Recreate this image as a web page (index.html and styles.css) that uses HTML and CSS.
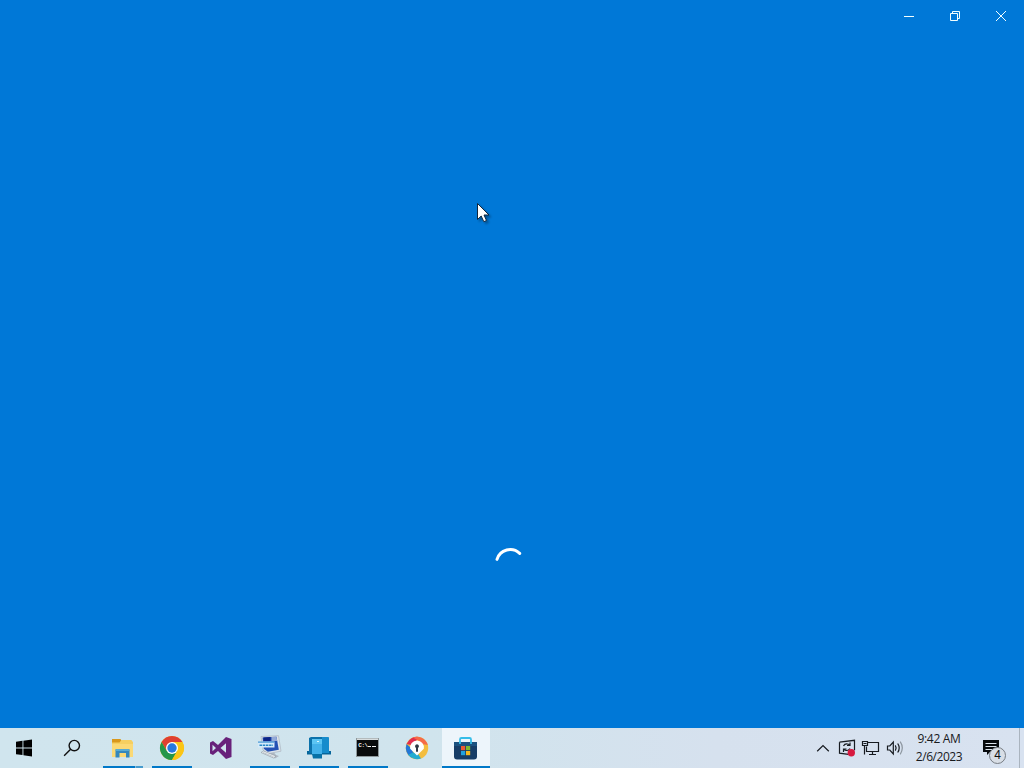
FILE: index.html
```html
<!DOCTYPE html>
<html lang="en">
<head>
    <meta charset="UTF-8">
    <meta name="viewport" content="width=device-width, initial-scale=1.0">
    <title>Microsoft Store</title>
    <link rel="stylesheet" href="styles.css">
</head>
<body>
    <div class="desktop">
        <main class="window">
            <div class="titlebar">
                <button class="caption" aria-label="Minimize">
                    <svg width="46" height="32"><path d="M18 16.5h10"/></svg>
                </button>
                <button class="caption" aria-label="Restore">
                    <svg width="46" height="32"><path d="M18.500 13.500h7v7h-7zM20.500 13.500v-2h7v7h-2"/></svg>
                </button>
                <button class="caption" aria-label="Close">
                    <svg width="46" height="32"><path d="M18 11l10 10M28 11l-10 10"/></svg>
                </button>
            </div>
            <div class="splash">
                <svg class="spinner" width="32" height="32" viewBox="0 0 32 32"><path d="M4 13.400A13.800 13.800 0 0 1 26.700 7.400"/></svg>
            </div>
            <svg class="cursor" width="18" height="24" viewBox="0 0 18 24">
                <path d="M1.500 1.500v16l3.700-3.500 2.600 5.700 2.700-1.200-2.500-5.500h5z"/>
            </svg>
        </main>

        <footer class="taskbar">
            <div class="system">
                <button class="item" aria-label="Start">
                    <svg width="48" height="40"><path d="M16 13.800l6.500-1v6.700H16zM23.400 12.700l8.600-1.200v8H23.400zM16 20.400h6.500v6.700l-6.500-.9zM23.400 20.400H32v8l-8.600-1.200z"/></svg>
                </button>
                <button class="item" aria-label="Search">
                    <svg width="48" height="40" fill="none" stroke="#111" stroke-width="1.400"><circle cx="26.300" cy="17.600" r="5.200"/><path d="M22.600 21.300l-6.500 6.500"/></svg>
                </button>
            </div>
            <div class="apps">
                <button class="item running grouped" aria-label="File Explorer">
                    <svg width="48" height="40">
                        <path fill="#d9981c" d="M13 11h8.500l1.500 2.500V17H13z"/>
                        <path fill="#f6cf60" d="M13 14.500h7.500l2-2.500H32q1 0 1 1l1 1V28q0 1-1 1H14q-1 0-1-1z"/>
                        <path fill="#fbd975" d="M13 16h21v12q0 1-1 1H14q-1 0-1-1z"/>
                        <path fill="#3488bd" d="M16.500 22q0-1 1-1h12q1 0 1 1v7.500H27V25h-6.500v4.500h-4z"/>
                        <path fill="#58abd3" d="M17.500 21h12q1 0 1 1v1h-14v-1q0-1 1-1z"/>
                    </svg>
                </button>
                <button class="item running" aria-label="Google Chrome">
                    <svg width="48" height="40">
                        <circle cx="24" cy="20" r="12" fill="#fbc516"/>
                        <path fill="#df3f32" d="M13.600 14A12 12 0 0 1 34.400 14H24l-5.200 9z"/>
                        <path fill="#24964a" d="M13.600 14A12 12 0 0 0 24 32l5.200-9H18.800z"/>
                        <path fill="#fbc516" d="M24 14h10.400A12 12 0 0 1 24 32l5.200-9z"/>
                        <circle cx="24" cy="20" r="6" fill="#fff"/>
                        <circle cx="24" cy="20" r="4.700" fill="#2878df"/>
                    </svg>
                </button>
                <button class="item" aria-label="Visual Studio">
                    <svg width="48" height="40">
                        <path fill="#68217a" fill-rule="evenodd" d="M29 9l5.500 2v18L29 31l-8-8-5 4-3-1.500v-11l3-1.500 5 4zM29 15.300L23.500 20l5.500 4.700zM15.500 16.700v6.600L19 20z"/>
                    </svg>
                </button>
                <button class="item running" aria-label="Run">
                    <svg width="48" height="40">
                        <path fill="#aeb8c3" d="M23 25l5-.5 2 2.500 3 1-4 2.500-7-3z"/>
                        <path fill="#dce3ea" stroke="#a9b4c0" stroke-width=".7" d="M15 8.500l17.500-.8 2.500 15.500-13.500 2.500L17 22z"/>
                        <path fill="#2350b4" d="M16.500 9.500l14-.8 2.300 13-11 2-4-3z"/>
                        <path fill="#0b2386" d="M17.500 9.500l7-.4v3.900h-7z"/>
                        <path fill="#93a9d7" d="M25.500 9l5-.3.700 4.300h-5.700z"/>
                        <path fill="#d4eafa" d="M12 13.500h16.500v6H12z"/>
                        <path fill="#4495d3" d="M12 13.500h16.500v1.200H12z"/>
                        <path stroke="#2686c5" stroke-width="1.600" stroke-dasharray="2.500 .7" d="M13.500 17.300h13.500"/>
                        <path fill="#edf1f4" stroke="#8c97a1" stroke-width=".6" d="M15 24.500l2.500-1.500 12.500 5-2.500 2z"/>
                        <path fill="none" stroke="#a5afb8" stroke-width=".6" d="M17 24.500l10.500 4.200"/>
                    </svg>
                </button>
                <button class="item running" aria-label="Server Manager">
                    <svg width="48" height="40">
                        <path fill="#07669b" d="M12 23h24v3.500H12z"/>
                        <path fill="#0b72ab" d="M14 10l2-1h17l1 1v15H14z"/>
                        <path fill="#168ccc" d="M27 9h6l1 1v15h-7z"/>
                        <path fill="#43b1e9" d="M17 11h10v15H17z"/>
                        <path fill="#5cc5f3" d="M17 11h10v5H17z"/>
                        <path fill="#0871a6" d="M17 26h10v4.500h-9z"/>
                        <path stroke="#d4f5ff" d="M22 13.500h2"/>
                    </svg>
                </button>
                <button class="item running" aria-label="Command Prompt">
                    <svg width="48" height="40">
                        <path fill="#8f989b" d="M12 10h23v19H12z"/>
                        <path fill="#090b0c" d="M13 12h21v16H13z"/>
                        <path fill="#d9dedf" d="M13 10.500h21V12H13z"/>
                        <text class="prompt" x="14.300" y="18.500">C:\</text>
                        <path stroke="#f3f3f3" d="M24 18.500h3M28 18.500h4"/>
                    </svg>
                </button>
                <button class="item" aria-label="Password Safe">
                    <svg width="48" height="40">
                        <circle cx="24" cy="20" r="11.200" fill="#f3bd3e"/>
                        <path fill="#e22e4f" d="M13.500 16A11.200 11.200 0 0 1 27 9.300L21 15l-3 2z"/>
                        <path fill="#f56b48" d="M20 9.500A11.200 11.200 0 0 1 34.800 17L29 16l-3-3z"/>
                        <path fill="#2377d7" d="M13.500 16A11.200 11.200 0 0 0 18.500 29.700l2-5L17 19z"/>
                        <path fill="#24add0" d="M15.200 26.800A11.200 11.200 0 0 0 28 30.500L25 26l-5-1.500z"/>
                        <path fill="#fff" d="M24 12.500a7 7 0 0 1 6.800 8.300L24 27.500l-6.800-6.700A7 7 0 0 1 24 12.500z"/>
                        <path fill="#303a45" d="M24 16.300a2 2 0 0 1 1 3.700v3.700h-2V20a2 2 0 0 1 1-3.700z"/>
                    </svg>
                </button>
                <button class="item active" aria-label="Microsoft Store">
                    <svg width="48" height="40">
                        <path fill="#173d67" d="M12 14h23v14.500q0 3-3 3H15q-3 0-3-3z"/>
                        <path fill="#1c517f" d="M12 14h23v4H12z"/>
                        <path fill="none" stroke="#35bde8" stroke-width="1.800" d="M18 16V11.400q0-1.400 1.400-1.400h8.200q1.400 0 1.400 1.400V16"/>
                        <path fill="#ed5a32" d="M19 18h4.200v4.200H19z"/>
                        <path fill="#80b92d" d="M24 18h4.200v4.200H24z"/>
                        <path fill="#22a2df" d="M19 23h4.200v4.200H19z"/>
                        <path fill="#f6b91e" d="M24 23h4.200v4.200H24z"/>
                    </svg>
                </button>
            </div>
            <div class="tray">
                <button aria-label="Show hidden icons">
                    <svg width="24" height="40"><path d="M6.200 23.200l5.800-5.700 5.800 5.700"/></svg>
                </button>
                <button aria-label="Windows Update">
                    <svg width="24" height="40">
                        <path d="M4.500 14.200l15-1.900v10M4.500 14.200v11l9 1.200"/>
                        <path d="M8.500 18q1.500-3 5-1.700l1.500 1.200M15 14.500v3h-3M15 20.500q-2 3-5 1.500l-1.500-1M8.500 24v-3h3"/>
                        <circle class="alert" cx="16.300" cy="24.700" r="3.700"/>
                    </svg>
                </button>
                <button aria-label="Network">
                    <svg width="24" height="40"><path d="M9 14.500h10.500v9H7.500v-5M13.500 23.500v3M10 26.500h7M3.500 13.500h5v4h-5zM5.500 17.500v9M4.500 15.500h3"/></svg>
                </button>
                <button aria-label="Volume">
                    <svg width="24" height="40"><path d="M4.500 18h2.300l3.500-4v12l-3.500-4H4.500zM12.300 17.400q1.600 2.600 0 5.200M14.700 15.500q3 4.500 0 9"/><path class="faint" d="M17.200 13.700q4.200 6.300 0 12.600"/></svg>
                </button>
                <div class="clock">
                    <span class="time">9:42 AM</span>
                    <span class="date">2/6/2023</span>
                </div>
                <button class="notifications" aria-label="Notifications">
                    <svg width="48" height="40">
                        <path class="message" d="M12 12h16v12H19l-3 3v-3h-4z"/>
                        <path class="lines" d="M14.500 15.500h11M14.500 18.500h11M14.500 21.500h7"/>
                    </svg>
                    <span class="badge">4</span>
                </button>
                <div class="show-desktop"></div>
            </div>
        </footer>
    </div>
</body>
</html>
```
FILE: styles.css
```css
* {
    box-sizing: border-box;
}

body {
    margin: 0;
    overflow: hidden;
    font-family: "Open Sans", "Noto Sans", sans-serif;
}

button {
    display: block;
    padding: 0;
    border: 0;
    background: none;
}

svg {
    display: block;
}

.desktop {
    display: flex;
    flex-direction: column;
    width: 100%;
    height: 100vh;
}

.window {
    position: relative;
    display: flex;
    flex: 1;
    flex-direction: column;
    background: #0078d7;
}

.titlebar {
    display: flex;
    justify-content: flex-end;
    height: 32px;
}

.caption svg {
    fill: none;
    stroke: #f2ffff;
    stroke-width: 1;
}

.splash {
    display: flex;
    flex: 1;
    justify-content: center;
    align-items: flex-end;
    padding: 0 6px 150px 0;
}

.spinner {
    fill: none;
    stroke: #fff;
    stroke-width: 3;
    stroke-linecap: round;
}

.cursor {
    position: absolute;
    top: 202px;
    left: 476px;
    fill: #fff;
    stroke: #10263c;
    stroke-width: 1;
    filter: drop-shadow(2px 2px 1px rgba(0, 0, 0, 0.3));
}

.taskbar {
    display: flex;
    height: 40px;
    background: linear-gradient(90deg, #d0e5ee 0%, #d0e4ed 42%, #d6e1ee 70%, #d8e2f0 100%);
}

.system,
.apps,
.tray {
    display: flex;
}

.system {
    margin-right: 3px;
}

.apps {
    gap: 1px;
}

.item {
    position: relative;
    width: 48px;
    height: 40px;
}

.running::after,
.active::after {
    content: "";
    position: absolute;
    right: 4px;
    bottom: 0;
    left: 4px;
    height: 2px;
    background: #0078c8;
}

.grouped::after {
    background: linear-gradient(90deg, #0078c8 32px, #85b8d5 32px, #85b8d5 33px, #469bce 33px);
}

.active {
    background: #edf5fb;
}

.active::after {
    right: 0;
    left: 0;
}

.prompt {
    fill: #f3f3f3;
    font-family: "Liberation Mono", monospace;
    font-size: 6px;
    font-weight: bold;
    letter-spacing: -0.5px;
}

.tray {
    margin-left: auto;
}

.tray svg {
    fill: none;
    stroke: #171b20;
    stroke-width: 1.2;
}

.tray .alert {
    fill: #d7193f;
    stroke: none;
}

.tray .faint {
    stroke: #8d969f;
}

.clock {
    display: flex;
    flex-direction: column;
    align-items: center;
    width: 64px;
    padding-top: 2px;
    font-size: 12px;
    line-height: 18px;
    color: #17191c;
    white-space: nowrap;
}

.time {
    letter-spacing: -0.3px;
}

.date {
    letter-spacing: -0.45px;
}

.notifications {
    position: relative;
    width: 48px;
}

.tray .message {
    fill: #080b0e;
    stroke: none;
}

.tray .lines {
    stroke: #dce4ed;
    stroke-width: 1;
}

.badge {
    position: absolute;
    top: 19px;
    left: 18px;
    width: 17px;
    height: 17px;
    border: 1px solid #777d84;
    border-radius: 50%;
    background: #d8dee6;
    color: #111;
    font-size: 12px;
    line-height: 15px;
    text-align: center;
}

.show-desktop {
    width: 5px;
    border-left: 1px solid #aab4bf;
}
```
